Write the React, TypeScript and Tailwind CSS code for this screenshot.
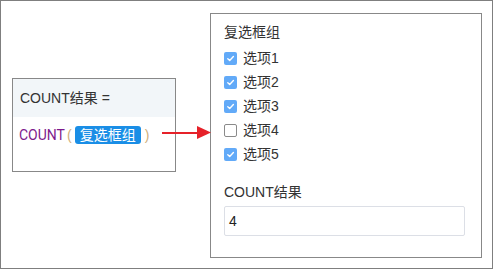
import React from "react";

const Check = ({ checked }: { checked: boolean }) =>
  checked ? (
    <span className="w-[13px] h-[13px] rounded-[2px] bg-[#62aaf8] flex items-center justify-center shrink-0">
      <svg width="9" height="9" viewBox="0 0 9 9">
        <path d="M1.8 4.8 L3.7 6.5 L7.4 2.6" stroke="#fff" strokeWidth="1.4" fill="none" strokeLinecap="round" strokeLinejoin="round" />
      </svg>
    </span>
  ) : (
    <span className="w-[13px] h-[13px] rounded-[2px] border border-[#8a8a8a] bg-white shrink-0" />
  );

export default function App() {
  const items = [
    { label: "选项1", checked: true },
    { label: "选项2", checked: true },
    { label: "选项3", checked: true },
    { label: "选项4", checked: false },
    { label: "选项5", checked: true },
  ];
  return (
    <div
      className="relative w-[493px] h-[269px] border border-[#7f7f7f] bg-white flex items-start pl-[11px] pt-[12px] text-[14px] text-[#333]"
      style={{ fontFamily: '"Liberation Sans", "Noto Sans CJK SC", sans-serif' }}
    >
      <div className="mt-[65px] w-[164px] h-[94px] border border-[#888] flex flex-col">
        <div className="h-[38px] bg-[#f2f6f9] flex items-center px-[7px] leading-5">COUNT结果 =</div>
        <div className="flex items-center pl-[6px] mt-[8px] h-[20px]">
          <span className="text-[#7d1a8c] font-['Roboto']">COUNT</span>
          <span className="text-[#cfae7a] ml-[2px] mr-[3px]">(</span>
          <span className="bg-[#1a8ee6] text-white rounded-[3px] h-[18px] px-[5px] flex items-center leading-4">复选框组</span>
          <span className="text-[#cfae7a] ml-[4px]">)</span>
        </div>
      </div>
      <div className="ml-[34px] w-[272px] h-[245px] border border-[#888] flex flex-col pl-[13px] pt-[8px]">
        <div className="h-[20px] leading-5">复选框组</div>
        <div className="mt-[4px] flex flex-col">
          {items.map((it) => (
            <div key={it.label} className="h-[24px] flex items-center gap-[6px]">
              <Check checked={it.checked} />
              <span className="leading-5">{it.label}</span>
            </div>
          ))}
        </div>
        <div className="mt-[16px] h-[20px] leading-5">COUNT结果</div>
        <div className="mt-[4px] w-[241px] h-[30px] border border-[#dcdfe6] rounded-[2px] flex items-center pl-[4px] text-[14px] text-[#222]">
          4
        </div>
      </div>
      <div className="absolute left-[161px] top-[125px] flex items-center">
        <div className="w-[35px] h-[2px] bg-[#e62129]" />
        <svg width="14" height="13" viewBox="0 0 14 13">
          <polygon points="0,0 14,6.5 0,13" fill="#e62129" />
        </svg>
      </div>
    </div>
  );
}
